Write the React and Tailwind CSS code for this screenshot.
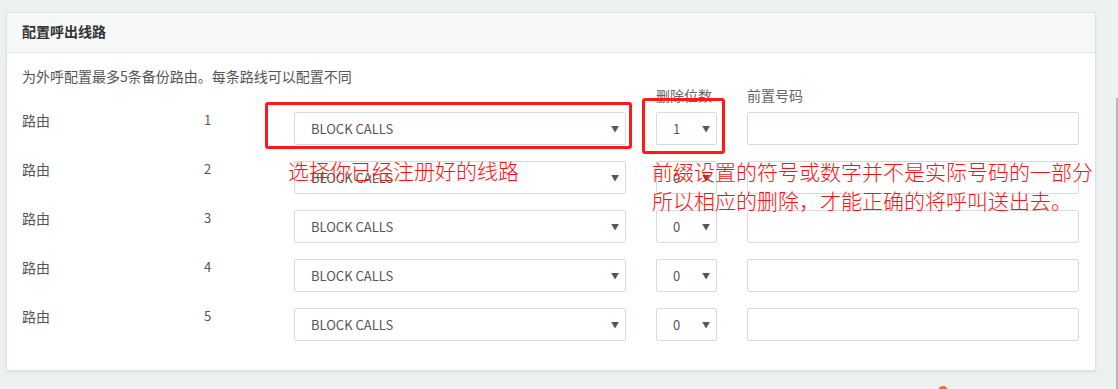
import React from "react";

const font = { fontFamily: '"Noto Sans CJK SC", "Noto Sans", sans-serif' };

function Arrow() {
  return <span className="text-[8px] leading-none text-[#555]">▼</span>;
}

function Row({ n, digit }) {
  return (
    <div className="flex items-start">
      <div className="w-[182px] text-[14px] leading-[16px] text-[#555]">路由</div>
      <div className="w-[90px] text-[13px] leading-[16px] text-[#555]">{n}</div>
      <div className="w-[332px] h-[33px] border border-[#d3dcdd] rounded-[2px] bg-white flex items-center justify-between pl-[16px] pr-[6px]">
        <span className="text-[13px] text-[#555]">BLOCK CALLS</span>
        <Arrow />
      </div>
      <div className="ml-[30px] w-[61px] h-[33px] border border-[#d3dcdd] rounded-[2px] bg-white flex items-center justify-between pl-[16px] pr-[6px]">
        <span className="text-[13px] text-[#555]">{digit}</span>
        <Arrow />
      </div>
      <div className="ml-[30px] w-[332px] h-[33px] border border-[#d3dcdd] rounded-[2px] bg-white" />
    </div>
  );
}

export default function App() {
  const rows = [
    [1, 1],
    [2, 0],
    [3, 0],
    [4, 0],
    [5, 0],
  ];
  return (
    <div
      className="relative w-[1118px] h-[389px] bg-[#eef1f2] overflow-hidden pt-[12px] pl-[6px]"
      style={font}
    >
      <div className="w-[1090px] border border-[#dde3e5] bg-white shadow-[0_1px_2px_rgba(0,0,0,0.08)]">
        <div className="h-[40px] bg-[#f6f7f7] border-b border-[#e4e8e9] px-[15px] pb-[3px] flex items-center">
          <span className="text-[14px] leading-[20px] font-bold text-[#333]">配置呼出线路</span>
        </div>
        <div className="px-[15px] pt-[13px] pb-[29px]">
          <div className="text-[14px] leading-[20px] text-[#555]">
            为外呼配置最多5条备份路由。每条路线可以配置不同
          </div>
          <div className="flex text-[14px] leading-[20px] text-[#666] -mt-[1px]">
            <div className="ml-[634px] w-[61px] whitespace-nowrap">删除位数</div>
            <div className="ml-[30px]">前置号码</div>
          </div>
          <div className="mt-[7px] flex flex-col gap-[16px]">
            {rows.map(([n, d]) => (
              <Row key={n} n={n} digit={d} />
            ))}
          </div>
        </div>
      </div>

      {/* annotations */}
      <div className="absolute left-[265px] top-[102px] w-[367px] h-[47px] border-[3px] border-[#ff1a1a] rounded-[3px]" />
      <div className="absolute left-[642px] top-[98px] w-[83px] h-[56px] border-[3px] border-[#ff1a1a] rounded-[3px]" />
      <div className="absolute left-[288px] top-[156px] text-[21px] leading-[29px] font-light text-[#ff1010] whitespace-nowrap">
        选择你已经注册好的线路
      </div>
      <div className="absolute left-[652px] top-[157px] text-[21px] leading-[29px] font-light text-[#ff1010] whitespace-nowrap">
        <div>前缀设置的符号或数字并不是实际号码的一部分</div>
        <div>所以相应的删除，才能正确的将呼叫送出去。</div>
      </div>

      {/* scrollbar edge */}
      <div className="absolute right-0 top-[98px] w-[2px] h-[291px] bg-[#b8b8b8]" />
      {/* orange mark */}
      <div className="absolute left-[938px] top-[386px] w-[10px] h-[6px] rounded-t-full bg-[#ff6a1a]" />
    </div>
  );
}
